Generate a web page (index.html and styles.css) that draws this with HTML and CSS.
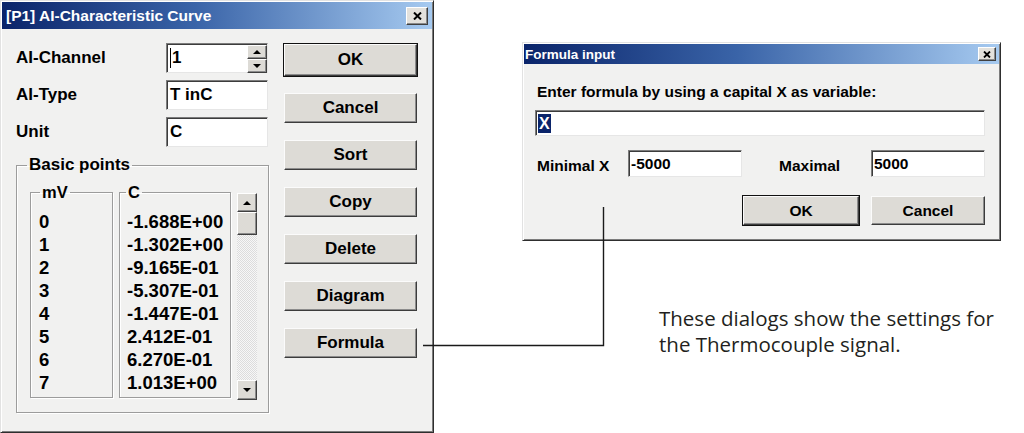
FILE: index.html
```html
<!DOCTYPE html>
<html lang="en">
<head>
<meta charset="utf-8">
<title>AI-Characteristic Curve</title>
<link rel="stylesheet" href="styles.css">
</head>
<body>
<div class="canvas">
  <section class="dlg dlg-main">
    <header class="titlebar">
      <span class="title">[P1] AI-Characteristic Curve</span>
      <span class="close"><svg width="9" height="8" viewBox="0 0 9 8"><path d="M1 0.5 L8 7.5 M8 0.5 L1 7.5" stroke="#000" stroke-width="2" fill="none"/></svg></span>
    </header>
    <div class="main-body">
      <div class="form-col">
        <div class="fields">
          <div class="field-row">
            <span class="lbl">AI-Channel</span>
            <div class="edit spin-edit">
              <span class="val"><span class="caret"></span>1</span>
              <span class="spin">
                <span class="spin-btn"><span class="tri up"></span></span>
                <span class="spin-btn"><span class="tri down"></span></span>
              </span>
            </div>
          </div>
          <div class="field-row">
            <span class="lbl">AI-Type</span>
            <div class="edit">T inC</div>
          </div>
          <div class="field-row">
            <span class="lbl">Unit</span>
            <div class="edit">C</div>
          </div>
        </div>
        <fieldset class="group">
          <legend>Basic points</legend>
          <div class="points">
            <fieldset class="col col-mv">
              <legend>mV</legend>
              <div class="cell">0</div><div class="cell">1</div><div class="cell">2</div><div class="cell">3</div>
              <div class="cell">4</div><div class="cell">5</div><div class="cell">6</div><div class="cell">7</div>
            </fieldset>
            <fieldset class="col col-c">
              <legend>C</legend>
              <div class="cell">-1.688E+00</div><div class="cell">-1.302E+00</div><div class="cell">-9.165E-01</div><div class="cell">-5.307E-01</div>
              <div class="cell">-1.447E-01</div><div class="cell">2.412E-01</div><div class="cell">6.270E-01</div><div class="cell">1.013E+00</div>
            </fieldset>
            <div class="vscroll">
              <span class="sb-btn"><span class="tri up"></span></span>
              <span class="sb-thumb"></span>
              <span class="sb-track"></span>
              <span class="sb-btn sb-down"><span class="tri down"></span></span>
            </div>
          </div>
        </fieldset>
      </div>
      <div class="btn-col">
        <div class="btn default">OK</div>
        <div class="btn">Cancel</div>
        <div class="btn">Sort</div>
        <div class="btn">Copy</div>
        <div class="btn">Delete</div>
        <div class="btn">Diagram</div>
        <div class="btn">Formula</div>
      </div>
    </div>
  </section>

  <section class="dlg dlg-formula">
    <header class="titlebar">
      <span class="title">Formula input</span>
      <span class="close"><svg width="8" height="7" viewBox="0 0 8 7"><path d="M1 0.5 L7 6.5 M7 0.5 L1 6.5" stroke="#000" stroke-width="1.8" fill="none"/></svg></span>
    </header>
    <div class="formula-body">
      <div class="prompt">Enter formula by using a capital X as variable:</div>
      <div class="edit f-edit"><span class="sel">X</span></div>
      <div class="range-row">
        <span class="f-lbl">Minimal X</span>
        <div class="edit f-num">-5000</div>
        <span class="f-lbl f-lbl-max">Maximal</span>
        <div class="edit f-num">5000</div>
      </div>
      <div class="f-buttons">
        <div class="btn f-btn default">OK</div>
        <div class="btn f-btn">Cancel</div>
      </div>
    </div>
  </section>

  <svg class="connector" width="1024" height="433" viewBox="0 0 1024 433">
    <polyline points="423,345.5 603.5,345.5 603.5,207" fill="none" stroke="#1a1a1a" stroke-width="1.4"/>
  </svg>

  <p class="note">These dialogs show the settings for<br>the Thermocouple signal.</p>
</div>
</body>
</html>
```

FILE: styles.css
```css
* { box-sizing: border-box; }
html, body { margin: 0; padding: 0; }
body {
  background: #fff;
  width: 1024px;
  height: 433px;
  overflow: hidden;
  font-family: "Liberation Sans", Arial, sans-serif;
  color: #000;
}
.canvas { position: relative; width: 1024px; height: 433px; }

/* window frame */
.dlg {
  position: absolute;
  display: flex;
  flex-direction: column;
  background: #f1f1f0;
  border: 1px solid;
  border-color: #e2e2e2 #2e2e2e #2e2e2e #e2e2e2;
  box-shadow: inset 1px 1px #fff, inset -1px -1px #7c7c7c;
  padding: 1px;
}
.dlg-main { left: 0; top: 0; width: 434px; height: 433px; }
.dlg-formula { left: 522px; top: 42px; width: 479px; height: 199px; }

.titlebar {
  display: flex;
  align-items: center;
  justify-content: space-between;
  background: linear-gradient(to right, #0a246a 0%, #3a64a8 45%, #a6caf0 100%);
  color: #fff;
  font-weight: bold;
  flex: none;
}
.dlg-main .titlebar { height: 27px; padding: 0 4px 0 4px; font-size: 15.5px; }
.dlg-formula .titlebar { height: 20px; padding: 0 3px 0 1px; font-size: 13.5px; }

.close {
  display: flex;
  align-items: center;
  justify-content: center;
  background: #e3e1dc;
  border: 1px solid;
  border-color: #fff #404040 #404040 #fff;
  box-shadow: inset -1px -1px #8a8a8a;
}
.dlg-main .close { width: 22px; height: 18px; }
.dlg-formula .close { width: 18px; height: 14px; }

/* buttons */
.btn {
  display: flex;
  align-items: center;
  justify-content: center;
  height: 30px;
  background: #dddbd6;
  border: 1px solid;
  border-color: #fbfbfb #3c3c3c #3c3c3c #fbfbfb;
  box-shadow: inset -1px -1px #8c8c8c;
  font-size: 17px;
  font-weight: bold;
}
.btn.default {
  box-shadow: 0 0 0 1px #111, inset -1px -1px #8c8c8c;
}

/* sunken edit */
.edit {
  display: flex;
  align-items: center;
  background: #fff;
  border: 1px solid;
  border-color: #7c7c7c #e6e6e6 #e6e6e6 #7c7c7c;
  box-shadow: inset 1px 1px #3c3c3c;
  padding-left: 3px;
  font-size: 17px;
  font-weight: bold;
}

/* main dialog */
.main-body {
  flex: 1;
  display: flex;
  gap: 15px;
  padding: 14px 13px 0 14px;
}
.form-col { width: 253px; display: flex; flex-direction: column; }
.fields { display: flex; flex-direction: column; gap: 7px; }
.field-row { display: flex; align-items: center; height: 30px; }
.lbl { width: 150px; font-size: 17px; font-weight: bold; }
.field-row .edit { width: 102px; height: 30px; }

.spin-edit { justify-content: space-between; padding-right: 0; }
.val { display: flex; align-items: center; }
.caret { width: 1px; height: 20px; background: #000; margin-right: 1px; }
.spin { display: flex; flex-direction: column; width: 20px; height: 28px; margin-top: 1px; }
.spin-btn, .sb-btn {
  flex: 1;
  display: flex;
  align-items: center;
  justify-content: center;
  background: #dddbd6;
  border: 1px solid;
  border-color: #fff #404040 #404040 #fff;
  box-shadow: inset -1px -1px #8c8c8c;
}
.tri { width: 0; height: 0; border-left: 4px solid transparent; border-right: 4px solid transparent; }
.tri.up { border-bottom: 4px solid #000; }
.tri.down { border-top: 4px solid #000; }

/* group boxes */
.group {
  margin: 8px 0 0;
  padding: 7px 11px 12px 13px;
  min-width: 0;
  width: 253px;
  border: 1px solid #9c9c9c;
  box-shadow: inset 1px 1px #fff, 1px 1px #fff;
}
.group > legend {
  font-size: 17px;
  font-weight: bold;
  line-height: 20px;
  padding: 0 2px;
  margin-left: -3px;
}
.points { display: flex; align-items: flex-start; gap: 6px; }
.col {
  margin: 0;
  min-width: 0;
  border: 1px solid #9c9c9c;
  box-shadow: inset 1px 1px #fff, 1px 1px #fff;
  padding: 8px 0 3px 8px;
}
.col legend {
  font-size: 16.5px;
  font-weight: bold;
  line-height: 20px;
  padding: 0 2px;
}
.col-mv { width: 83px; }
.col-mv legend { margin-left: 1px; }
.col-c { width: 112px; padding-left: 7px; }
.col-c legend { margin-left: -1px; }
.cell { font-size: 18.5px; font-weight: bold; line-height: 23px; height: 23px; white-space: nowrap; }

.vscroll {
  width: 20px;
  height: 207px;
  margin-top: 11px;
  display: flex;
  flex-direction: column;
  background: repeating-conic-gradient(#f7f7f7 0 25%, #dcdcdc 0 50%) 0 0 / 2px 2px;
}
.sb-btn { flex: none; height: 19px; }
.sb-down { height: 20px; }
.sb-thumb {
  height: 23px;
  background: #dddbd6;
  border: 1px solid;
  border-color: #fff #404040 #404040 #fff;
  box-shadow: inset -1px -1px #8c8c8c;
}
.sb-track { flex: 1; }

.btn-col { width: 133px; display: flex; flex-direction: column; gap: 17px; padding-top: 1px; }
.btn-col .btn.default { height: 32px; }

/* formula dialog */
.formula-body {
  flex: 1;
  display: flex;
  flex-direction: column;
  padding: 19px 14px 0 11px;
  font-size: 15.5px;
  font-weight: bold;
}
.prompt { line-height: 18px; padding-left: 2px; }
.f-edit { margin-top: 9px; height: 26px; padding-left: 2px; }
.sel {
  background: #0a246a;
  color: #fff;
  font-size: 16px;
  line-height: 19px;
  padding: 0 1px;
}
.range-row {
  margin-top: 14px;
  display: grid;
  grid-template-columns: 93px 114px 129px 114px;
  align-items: center;
  height: 27px;
}
.f-lbl { padding-left: 2px; padding-top: 4px; }
.f-lbl-max { padding-left: 37px; }
.f-num { height: 27px; font-size: 15.5px; padding-left: 2px; }
.f-buttons { margin-top: 19px; display: flex; justify-content: flex-end; gap: 12px; }
.f-btn { height: 29px; width: 114px; font-size: 15.5px; }
.f-btn.default { width: 116px; }

/* annotation */
.connector { position: absolute; left: 0; top: 0; pointer-events: none; }
.note {
  position: absolute;
  left: 659px;
  top: 306px;
  margin: 0;
  font-family: "Open Sans", "Noto Sans", sans-serif;
  font-size: 20.5px;
  line-height: 25.5px;
  color: #231f20;
}
```
